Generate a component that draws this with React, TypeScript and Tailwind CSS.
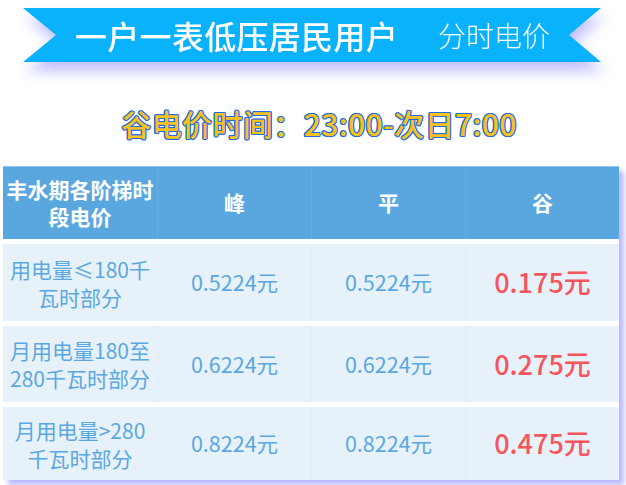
const FONT = "font-['Noto_Sans_CJK_SC','Noto_Sans',sans-serif]";

interface Row {
  label: [string, string];
  peak: string;
  flat: string;
  valley: string;
  h: string;
}

const ROWS: Row[] = [
  { label: ['用电量≤180千', '瓦时部分'], peak: '0.5224元', flat: '0.5224元', valley: '0.175元', h: 'h-[77px]' },
  { label: ['月用电量180至', '280千瓦时部分'], peak: '0.6224元', flat: '0.6224元', valley: '0.275元', h: 'h-[76px]' },
  { label: ['月用电量>280', '千瓦时部分'], peak: '0.8224元', flat: '0.8224元', valley: '0.475元', h: 'h-[73px]' },
];

export default function App() {
  return (
    <div className={`w-[626px] h-[485px] bg-white overflow-hidden ${FONT}`}>
      {/* ribbon banner */}
      <div className="pt-2 pl-[23px] [filter:drop-shadow(3px_9px_7px_rgba(110,110,255,0.45))]">
        <div className="w-[578px] h-[54px] bg-[#0ab2fc] [clip-path:polygon(0_0,100%_0,calc(100%-32px)_50%,100%_100%,0_100%,33px_50%)] flex items-center">
          <span className="ml-[52px] text-[32px] font-medium text-white tracking-[0.3px] leading-none">
            一户一表低压居民用户
          </span>
          <span className="ml-[40px] text-[28px] font-light text-white leading-none">分时电价</span>
        </div>
      </div>

      {/* valley time */}
      <div className="mt-[46px] flex justify-center pl-[12px]">
        <span className="text-[30px] font-medium text-[#f9c21a] leading-none tracking-[0.4px] [text-shadow:1.2px_0_0_#1f6ce6,-1.2px_0_0_#1f6ce6,0_1.2px_0_#1f6ce6,0_-1.2px_0_#1f6ce6,0.8px_0.8px_0_#1f6ce6,-0.8px_-0.8px_0_#1f6ce6,0.8px_-0.8px_0_#1f6ce6,-0.8px_0.8px_0_#1f6ce6]">
          谷电价时间：23:00-次日7:00
        </span>
      </div>

      {/* price table */}
      <div className="mt-[28px] ml-[3px] w-[616px] bg-white shadow-[5px_5px_5px_rgba(140,140,255,0.6)] flex flex-col gap-[5px]">
        <div className="h-[73px] bg-[#5aa7df] grid grid-cols-4 text-white font-bold border-t border-[#8cc4ec]">
          <div className="flex flex-col items-center justify-center text-center text-[21px] leading-[27px]">
            <span>丰水期各阶梯时</span>
            <span>段电价</span>
          </div>
          <div className="flex items-center justify-center text-[21px] border-l border-[#64aee2]">峰</div>
          <div className="flex items-center justify-center text-[21px] border-l border-[#64aee2]">平</div>
          <div className="flex items-center justify-center text-[21px] border-l border-[#64aee2]">谷</div>
        </div>
        {ROWS.map((r, i) => (
          <div key={i} className={`${r.h} bg-[#e7f1fa] grid grid-cols-4 text-[#5aa8e1]`}>
            <div className="flex flex-col items-center justify-center text-center text-[21px] leading-[28px]">
              <span>{r.label[0]}</span>
              <span>{r.label[1]}</span>
            </div>
            <div className="flex items-center justify-center text-[21.5px] border-l border-[#e0ecf6]">{r.peak}</div>
            <div className="flex items-center justify-center text-[21.5px] border-l border-[#e0ecf6]">{r.flat}</div>
            <div className="flex items-center justify-center text-[27px] font-medium text-[#f7545b] border-l border-[#e0ecf6]">
              {r.valley}
            </div>
          </div>
        ))}
      </div>
    </div>
  );
}
